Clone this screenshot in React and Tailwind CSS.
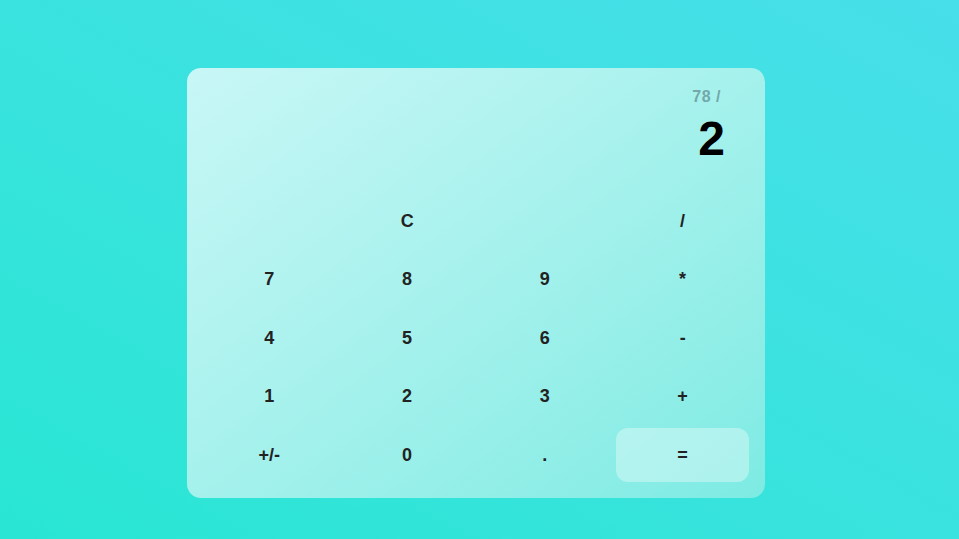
import React from "react";

const keys = [
  "", "C", "", "/",
  "7", "8", "9", "*",
  "4", "5", "6", "-",
  "1", "2", "3", "+",
  "+/-", "0", ".", "=",
];

const App = () => {
  return (
    <div
      className="min-h-screen w-full bg-gradient-to-tr from-[#28e6d3] to-[#47dfea] pl-[187px] pt-[68px]"
      style={{ fontFamily: '"Liberation Sans", Arial, sans-serif' }}
    >
      <div className="w-[578px] h-[430px] rounded-[14px] bg-gradient-to-br from-[#c8f7f6] to-[#7debe3] p-4 flex flex-col">
        <div className="h-[110px] flex flex-col items-end pr-6 pt-[3px]">
          <div className="pr-1 text-[16px] leading-[20px] font-bold tracking-[0.5px] text-[#73a9aa]">78 /</div>
          <div className="mt-2 text-[48px] leading-none font-bold text-black">2</div>
        </div>
        <div className="grid grid-cols-4 gap-x-[5px] gap-y-[4.5px]">
          {keys.map((k, i) => (
            <button
              key={i}
              className={
                "h-[54px] rounded-[12px] text-[18px] font-bold text-[#222] " +
                (k === "=" ? "bg-white/35" : "bg-transparent")
              }
            >
              {k}
            </button>
          ))}
        </div>
      </div>
    </div>
  );
};

export default App;
